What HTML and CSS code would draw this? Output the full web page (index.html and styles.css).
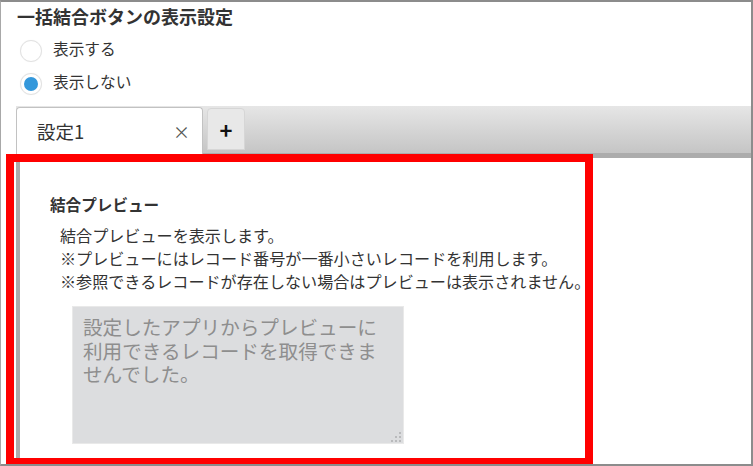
FILE: index.html
```html
<!DOCTYPE html>
<html lang="ja">
<head>
<meta charset="utf-8">
<title>一括結合ボタンの表示設定</title>
<link rel="stylesheet" href="styles.css">
</head>
<body>
<div class="frame">
  <div class="title">一括結合ボタンの表示設定</div>
  <div class="radios">
    <label class="radio-row"><span class="radio"></span><span class="radio-label">表示する</span></label>
    <label class="radio-row"><span class="radio checked"></span><span class="radio-label">表示しない</span></label>
  </div>
  <div class="tabbar">
    <div class="tab active"><span class="tab-name">設定1</span><span class="tab-close">×</span></div>
    <div class="tab-add">+</div>
  </div>
  <div class="panel">
    <div class="section-title">結合プレビュー</div>
    <div class="desc">
      <div>結合プレビューを表示します。</div>
      <div>※プレビューにはレコード番号が一番小さいレコードを利用します。</div>
      <div>※参照できるレコードが存在しない場合はプレビューは表示されません。</div>
    </div>
    <div class="preview">設定したアプリからプレビューに利用できるレコードを取得できませんでした。<svg class="grip" width="11" height="10" viewBox="0 0 11 10"><g fill="#b9babc"><rect x="8" y="0" width="2" height="2"/><rect x="4" y="4" width="2" height="2"/><rect x="8" y="4" width="2" height="2"/><rect x="0" y="8" width="2" height="2"/><rect x="4" y="8" width="2" height="2"/><rect x="8" y="8" width="2" height="2"/></g></svg></div>
  </div>
  <div class="highlight"></div>
</div>
</body>
</html>
```
FILE: styles.css
```css
html, body {
  margin: 0;
  padding: 0;
  background: #ffffff;
}
body {
  font-family: "Noto Sans CJK JP", "Noto Sans", sans-serif;
  color: #333333;
}
.frame {
  position: relative;
  width: 753px;
  height: 466px;
  box-sizing: border-box;
  border: 2px solid #8c8c8c;
  border-left: 1px solid #a8a8a8;
  background: #ffffff;
  overflow: hidden;
}
.title {
  padding-left: 16px;
  padding-top: 1px;
  font-size: 18px;
  font-weight: bold;
  line-height: 26px;
  color: #333;
}
.radios {
  margin-top: 3px;
  display: flex;
  flex-direction: column;
}
.radio-row {
  display: flex;
  align-items: center;
  height: 33px;
}
.radio {
  width: 20px;
  height: 20px;
  margin-left: 19px;
  margin-top: 4px;
  border-radius: 50%;
  border: 1px solid #e2e2e2;
  box-shadow: 0 0 1px rgba(0,0,0,0.08);
  background: #fff;
  display: flex;
  align-items: center;
  justify-content: center;
  flex: none;
}
.radio.checked::after {
  content: "";
  width: 14px;
  height: 14px;
  border-radius: 50%;
  background: #3498db;
}
.radio-label {
  margin-left: 11px;
  font-size: 15.7px;
  color: #333;
}
.tabbar {
  margin-top: 8px;
  margin-left: 15px;
  height: 47px;
  display: flex;
  align-items: flex-end;
  background: linear-gradient(#e6e6e6, #c5c5c5);
  border-bottom: 5px solid #acacac;
}
.tab {
  box-sizing: border-box;
  width: 187px;
  height: 51px;
  margin-bottom: -5px;
  background: #fff;
  border: 1px solid #c2c2c2;
  border-bottom: none;
  border-radius: 4px 4px 0 0;
  display: flex;
  align-items: center;
  padding: 0 12px 4px 20px;
}
.tab-name {
  font-size: 18.5px;
  color: #333;
  flex: 1;
}
.tab-close {
  font-size: 17px;
  color: #555;
}
.tab-add {
  box-sizing: border-box;
  width: 38px;
  height: 42px;
  margin-left: 4px;
  margin-bottom: 3px;
  background: #e8e8e8;
  border: 1px solid #d6d6d6;
  border-radius: 4px 4px 0 0;
  display: flex;
  align-items: center;
  justify-content: center;
  font-size: 22px;
  font-weight: bold;
  color: #111;
}
.panel {
  margin-left: 15px;
  border-left: 4px solid #acacac;
  padding: 35px 0 0 30px;
  height: 320px;
}
.section-title {
  font-size: 15.6px;
  font-weight: bold;
  line-height: 22px;
  color: #333;
}
.desc {
  margin-top: 9px;
  padding-left: 10px;
  font-size: 16.1px;
  line-height: 23px;
  color: #333;
}
.preview {
  position: relative;
  box-sizing: border-box;
  margin-top: 13px;
  margin-left: 22px;
  width: 332px;
  height: 138px;
  background: #dcdddf;
  border: 1px solid #e9e9e9;
  padding: 8px 10px;
  font-size: 19.6px;
  line-height: 23.5px;
  color: #8e8e8e;
}
.grip {
  position: absolute;
  right: 1px;
  bottom: 1px;
}
.highlight {
  position: absolute;
  left: 5px;
  top: 152px;
  width: 587px;
  bottom: -2px;
  box-sizing: border-box;
  border: 8px solid #ff0000;
  pointer-events: none;
}
```
